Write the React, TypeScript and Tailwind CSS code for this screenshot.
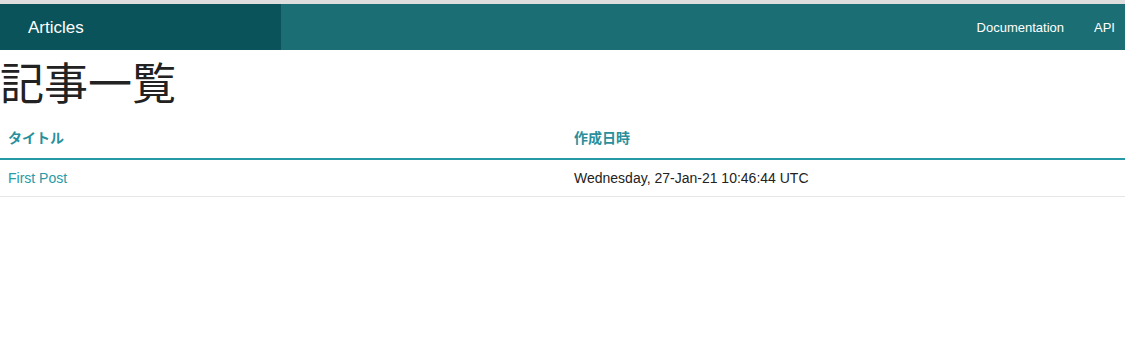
export default function App() {
  return (
    <div
      className="min-h-[349px] bg-white"
      style={{ fontFamily: '"Liberation Sans", Arial, "Noto Sans CJK JP", sans-serif' }}
    >
      <div className="h-[4px] bg-[#dedede]" />

      {/* navbar */}
      <nav className="flex h-[46px] bg-[#1b6e74] text-white">
        <div className="flex w-[281px] items-center bg-[#0a535a] pl-[28px] pt-[2px] text-[17px]">
          Articles
        </div>
        <div className="ml-auto flex items-center gap-[30px] pr-[10px] pt-[2px] text-[13px]">
          <a href="#">Documentation</a>
          <a href="#">API</a>
        </div>
      </nav>

      <h1 className="mt-[9px] text-[44px] leading-[52px] text-[#222]">記事一覧</h1>

      <table className="mt-[17px] w-full border-collapse text-[14px]">
        <thead>
          <tr className="border-b-2 border-[#2799a6]">
            <th className="w-[566px] px-[8px] pb-[9px] text-left font-bold text-[#2a8f9a]">タイトル</th>
            <th className="px-[8px] pb-[9px] text-left font-bold text-[#2a8f9a]">作成日時</th>
          </tr>
        </thead>
        <tbody>
          <tr className="border-b border-[#e6e6e6]">
            <td className="px-[8px] pt-[8px] pb-[7px] text-[#2a9aa5]">
              <a href="#">First Post</a>
            </td>
            <td className="px-[8px] pt-[8px] pb-[7px] text-[#222]">Wednesday, 27-Jan-21 10:46:44 UTC</td>
          </tr>
        </tbody>
      </table>
    </div>
  );
}
